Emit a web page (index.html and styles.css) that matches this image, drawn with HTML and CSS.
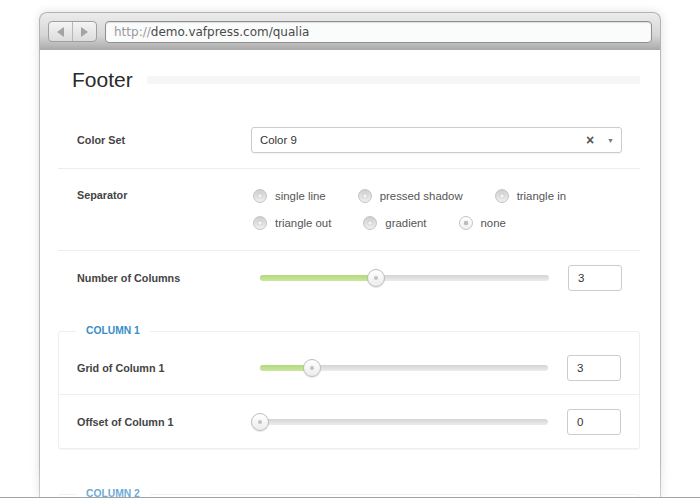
FILE: index.html
```html
<!DOCTYPE html>
<html>
<head>
  <meta charset="utf-8">
  <link rel="stylesheet" href="styles.css">
</head>
<body>
  <div class="window">
    <div class="titlebar">
      <div class="nav">
        <span class="nav-btn"><span class="arrow arrow-left"></span></span>
        <span class="nav-btn"><span class="arrow arrow-right"></span></span>
      </div>
      <div class="url"><span class="url-proto">http://</span>demo.vafpress.com/qualia</div>
    </div>

    <div class="content">
      <div class="page-title">
        <h1>Footer</h1>
        <div class="title-bar"></div>
      </div>

      <div class="row row-select">
        <div class="label">Color Set</div>
        <div class="control">
          <div class="select">
            <span class="select-value">Color 9</span>
            <span class="select-clear">×</span>
            <span class="select-caret">▼</span>
          </div>
        </div>
      </div>

      <div class="row row-top">
        <div class="label label-line">Separator</div>
        <div class="control radios">
          <label class="radio"><span class="radio-dot"></span>single line</label>
          <label class="radio"><span class="radio-dot"></span>pressed shadow</label>
          <label class="radio"><span class="radio-dot"></span>triangle in</label>
          <label class="radio"><span class="radio-dot"></span>triangle out</label>
          <label class="radio"><span class="radio-dot"></span>gradient</label>
          <label class="radio"><span class="radio-dot checked"></span>none</label>
        </div>
      </div>

      <div class="row row-last">
        <div class="label">Number of Columns</div>
        <div class="control">
          <div class="slider">
            <div class="track">
              <div class="fill" style="width: 40%"></div>
              <div class="thumb" style="left: 40%"></div>
            </div>
          </div>
          <div class="number">3</div>
        </div>
      </div>

      <fieldset class="group">
        <legend>Column 1</legend>
        <div class="row row-first">
          <div class="label">Grid of Column 1</div>
          <div class="control">
            <div class="slider">
              <div class="track">
                <div class="fill" style="width: 18.2%"></div>
                <div class="thumb" style="left: 18.2%"></div>
              </div>
            </div>
            <div class="number">3</div>
          </div>
        </div>
        <div class="row row-last">
          <div class="label">Offset of Column 1</div>
          <div class="control">
            <div class="slider">
              <div class="track">
                <div class="fill" style="width: 0%"></div>
                <div class="thumb" style="left: 0%"></div>
              </div>
            </div>
            <div class="number">0</div>
          </div>
        </div>
      </fieldset>

      <fieldset class="group group-next">
        <legend>Column 2</legend>
      </fieldset>
    </div>
  </div>

  <div class="fade"></div>
</body>
</html>
```

FILE: styles.css
```css
body {
  margin: 0;
  background-color: #fff;
  font-family: "Liberation Sans", Arial, sans-serif;
  color: #444;
  overflow: hidden;
  height: 500px;
}

.window {
  width: 622px;
  margin: 12px 0 0 39px;
  border-radius: 8px 8px 0 0;
  box-shadow: 0 0 10px rgba(0, 0, 0, 0.13);
}

/* browser chrome */

.titlebar {
  display: flex;
  align-items: flex-start;
  height: 38px;
  box-sizing: border-box;
  padding: 8px 8px 0 8px;
  border: 1px solid #b3b3b3;
  border-bottom: none;
  border-radius: 8px 8px 0 0;
  background: linear-gradient(to bottom, #ececec 0%, #d6d6d6 60%, #b8b8b8 88%, #a9a9a9 100%);
}

.nav {
  display: flex;
  width: 49px;
  height: 21px;
  box-sizing: border-box;
  border: 1px solid #a0a0a0;
  border-radius: 4px;
  background: linear-gradient(to bottom, #f4f4f4, #dcdcdc);
}

.nav-btn {
  flex: 1;
  display: flex;
  align-items: center;
  justify-content: center;
}

.nav-btn + .nav-btn {
  border-left: 1px solid #b8b8b8;
}

.arrow {
  width: 0;
  height: 0;
  border-top: 5px solid transparent;
  border-bottom: 5px solid transparent;
}

.arrow-left {
  border-right: 7px solid #a3a3a3;
}

.arrow-right {
  border-left: 7px solid #a3a3a3;
}

.url {
  flex: 1;
  height: 22px;
  box-sizing: border-box;
  margin-left: 8px;
  padding-left: 8px;
  border: 1px solid #8f8f8f;
  border-radius: 4px;
  background-color: #fafbfb;
  box-shadow: inset 0 1px 1px rgba(0, 0, 0, 0.12);
  font-family: "DejaVu Sans", sans-serif;
  font-size: 12px;
  line-height: 20px;
  color: #4a4a4a;
}

.url-proto {
  color: #9a9a9a;
}

/* page */

.content {
  height: 450px;
  padding: 0 20px 0 18px;
  border-left: 1px solid #b9b9b9;
  border-right: 1px solid #b9b9b9;
  background-color: #fff;
}

.page-title {
  display: flex;
  align-items: center;
  padding: 15px 0 18px 14px;
}

.page-title h1 {
  margin: 0;
  font-family: "Liberation Sans", Arial, sans-serif;
  font-size: 21px;
  font-weight: normal;
  line-height: 30px;
  color: #2b2b2b;
}

.title-bar {
  flex: 1;
  height: 8px;
  margin-left: 14px;
  background-color: #f6f6f6;
}

.row {
  display: flex;
  align-items: center;
  padding: 14px 18px 14px 19px;
  border-bottom: 1px solid #eeeeee;
}

.row-select {
  padding-bottom: 15px;
}

.row-top {
  align-items: flex-start;
  padding-top: 13px;
  padding-bottom: 14px;
}

.row-last {
  border-bottom: none;
}

.label {
  width: 174px;
  flex-shrink: 0;
  font-size: 10.8px;
  font-weight: bold;
  color: #444;
}

.label-line {
  line-height: 27px;
}

.control {
  flex: 1;
  display: flex;
  align-items: center;
}

/* select */

.select {
  flex: 1;
  display: flex;
  align-items: center;
  height: 26px;
  box-sizing: border-box;
  padding: 0 7px 0 8px;
  border: 1px solid #cccccc;
  border-radius: 3px;
  box-shadow: 0 1px 1px rgba(0, 0, 0, 0.05);
  font-size: 11.4px;
  color: #333;
}

.select-value {
  flex: 1;
}

.select-clear {
  font-size: 14px;
  font-weight: bold;
  color: #555;
  margin-right: 13px;
}

.select-caret {
  font-size: 7px;
  color: #777;
}

/* radios */

.radios {
  flex-wrap: wrap;
}

.radio {
  display: flex;
  align-items: center;
  height: 27px;
  margin: 0 30px 0 2px;
  font-size: 11.4px;
  color: #555;
}

.radio-dot {
  position: relative;
  width: 14px;
  height: 14px;
  box-sizing: border-box;
  margin-right: 8px;
  border: 1px solid #c4c4c4;
  border-radius: 50%;
  background: linear-gradient(to bottom, #cfcfcf, #f0f0f0);
}

.radio-dot::after {
  content: '';
  position: absolute;
  width: 4px;
  height: 4px;
  top: 4px;
  left: 4px;
  border-radius: 50%;
  background-color: #f4f4f4;
  box-shadow: 0 0 1px rgba(0, 0, 0, 0.35);
}

.radio-dot.checked {
  background: linear-gradient(to bottom, #ffffff, #f0f0f0);
}

.radio-dot.checked::after {
  background-color: #bcbcbc;
}

/* slider */

.slider {
  flex: 1;
  margin-right: 10px;
  padding: 0 9px;
}

.track {
  position: relative;
  height: 6px;
  border-radius: 3px;
  background: linear-gradient(to bottom, #d4d4d4, #ececec);
}

.fill {
  height: 6px;
  border-radius: 3px;
  background: linear-gradient(to bottom, #b3d97c, #c9e79d);
}

.thumb {
  position: absolute;
  top: -6px;
  width: 18px;
  height: 18px;
  margin-left: -9px;
  box-sizing: border-box;
  border: 1px solid #bdbdbd;
  border-radius: 50%;
  background: linear-gradient(to bottom, #ffffff, #ececec);
  box-shadow: 0 1px 1px rgba(0, 0, 0, 0.1);
}

.thumb::after {
  content: '';
  position: absolute;
  width: 4px;
  height: 4px;
  top: 6px;
  left: 6px;
  border-radius: 50%;
  background-color: #c2c2c2;
}

.number {
  width: 54px;
  height: 26px;
  box-sizing: border-box;
  padding-left: 9px;
  border: 1px solid #cccccc;
  border-radius: 3px;
  font-size: 11.5px;
  line-height: 24px;
  color: #333;
}

/* groups */

.group {
  margin: 18px 0 0 0;
  padding: 0;
  min-width: 0;
  border: 1px solid #eeeeee;
  border-radius: 3px;
  box-shadow: 0 1px 1px rgba(0, 0, 0, 0.04);
}

.group legend {
  margin-left: 17px;
  padding: 0 10px;
  font-size: 10.3px;
  font-weight: bold;
  line-height: 16px;
  text-transform: uppercase;
  color: #3a8dc8;
}

.group .row {
  padding-left: 18px;
  padding-right: 18px;
  padding-bottom: 13px;
}

.group .row-first {
  padding-top: 16px;
}

.group-next {
  margin-top: 37px;
  height: 40px;
}

.fade {
  position: fixed;
  left: 0;
  right: 0;
  bottom: 2px;
  height: 36px;
  border-bottom: 1px solid #a3a3a3;
  background: linear-gradient(to bottom, rgba(255, 255, 255, 0), rgba(255, 255, 255, 0.3));
  box-shadow: 0 2px 0 #fff;
}
```
